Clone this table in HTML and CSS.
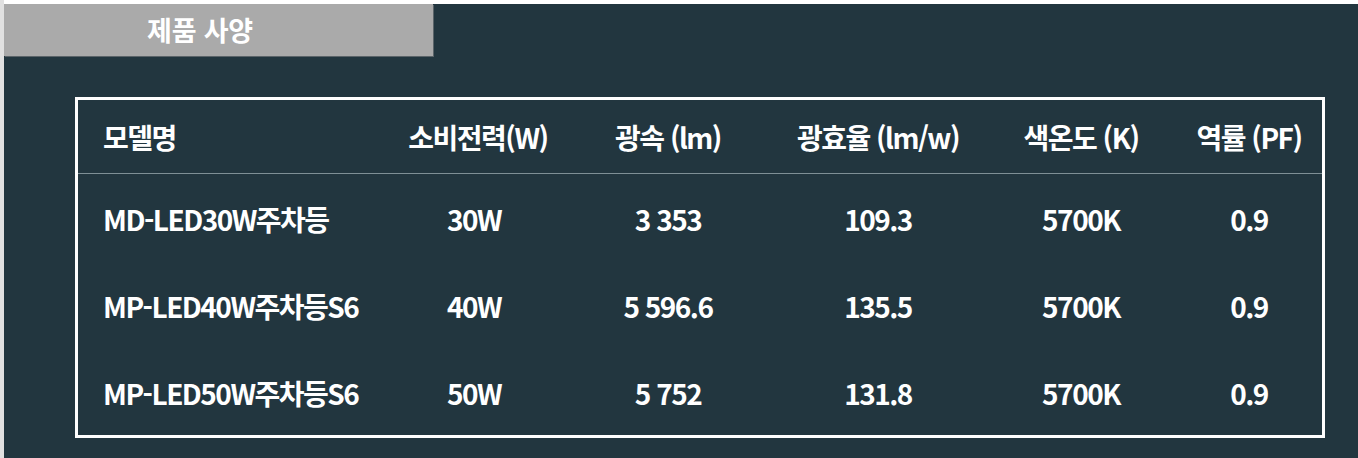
FILE: index.html
```html
<!DOCTYPE html>
<html lang="ko">
<head>
<meta charset="utf-8">
<title>제품 사양</title>
<link rel="stylesheet" href="styles.css">
</head>
<body>
<div class="frame">
  <div class="top-strip"></div>
  <section class="panel">
    <h2 class="tab">제품 사양</h2>
    <div class="spec-box">
      <div class="row head">
        <div class="cell first">모델명</div>
        <div class="cell c2">소비전력(W)</div>
        <div class="cell">광속 (lm)</div>
        <div class="cell">광효율 (lm/w)</div>
        <div class="cell">색온도 (K)</div>
        <div class="cell">역률 (PF)</div>
      </div>
      <div class="row body r1">
        <div class="cell first">MD-LED30W주차등</div>
        <div class="cell c2v">30W</div>
        <div class="cell">3 353</div>
        <div class="cell">109.3</div>
        <div class="cell">5700K</div>
        <div class="cell">0.9</div>
      </div>
      <div class="row body">
        <div class="cell first">MP-LED40W주차등S6</div>
        <div class="cell c2v">40W</div>
        <div class="cell">5 596.6</div>
        <div class="cell">135.5</div>
        <div class="cell">5700K</div>
        <div class="cell">0.9</div>
      </div>
      <div class="row body">
        <div class="cell first">MP-LED50W주차등S6</div>
        <div class="cell c2v">50W</div>
        <div class="cell">5 752</div>
        <div class="cell">131.8</div>
        <div class="cell">5700K</div>
        <div class="cell">0.9</div>
      </div>
    </div>
  </section>
</div>
</body>
</html>
```

FILE: styles.css
```css
html, body {
  margin: 0;
  padding: 0;
  background: #ffffff;
}

body {
  width: 1358px;
  height: 458px;
  overflow: hidden;
  font-family: "Noto Sans CJK KR", "Noto Sans", sans-serif;
  color: #ffffff;
}

.frame {
  height: 458px;
  border-left: 4px solid #e1e1e1;
  display: flex;
  flex-direction: column;
}

.top-strip {
  height: 4px;
  background: #ffffff;
  flex: none;
}

.panel {
  flex: 1;
  background: #22363f;
  display: flex;
  flex-direction: column;
  align-items: flex-start;
}

.tab {
  margin: 0;
  width: 429px;
  height: 52px;
  box-sizing: border-box;
  padding-left: 143px;
  background: #aaaaaa;
  box-shadow: 1px 1px 0 #5b6469;
  font-size: 27px;
  font-weight: 700;
  line-height: 52px;
  letter-spacing: -0.2px;
  color: #ffffff;
}

.spec-box {
  margin: 41px 0 0 71px;
  width: 1250px;
  box-sizing: border-box;
  border: 3px solid #ffffff;
}

.row {
  display: grid;
  grid-template-columns: 312px 176px 204px 216px 190px 146px;
  align-items: center;
  font-size: 28px;
  font-weight: 700;
  line-height: 34px;
  letter-spacing: -1.5px;
}

.row.head {
  height: 73px;
  border-bottom: 1px solid #7f9096;
}

.row.body {
  height: 87px;
}

.row.body .cell {
  padding-top: 2px;
}

.cell {
  text-align: center;
  white-space: nowrap;
}

.cell.first {
  text-align: left;
  padding-left: 25px;
}

.cell.c2v {
  padding-right: 8px;
}
```
